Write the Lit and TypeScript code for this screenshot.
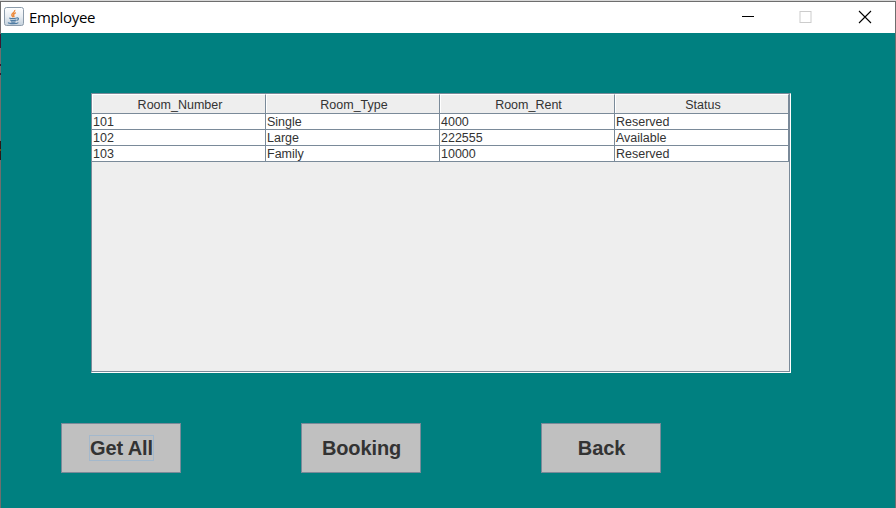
import { LitElement, html, css } from "lit";
import { customElement, property } from "lit/decorators.js";

const COLUMNS = ["Room_Number", "Room_Type", "Room_Rent", "Status"];
const ROOMS = [
  ["101", "Single", "4000", "Reserved"],
  ["102", "Large", "222555", "Available"],
  ["103", "Family", "10000", "Reserved"],
];

@customElement("title-bar")
class TitleBar extends LitElement {
  static styles = css`
    :host { display: flex; align-items: center; height: 31px; background: #fff; box-sizing: border-box; padding-left: 3px; }
    .logo { width: 20px; height: 20px; flex: none; display: block; margin-bottom: 1px; }
    .title { flex: 1; margin: 0 0 2px 5px; font: 15px/20px "Open Sans", "Noto Sans", sans-serif; letter-spacing: -.3px; color: #000; white-space: nowrap; }
    .controls { display: flex; width: 175px; }
    .controls svg { width: 58.5px; height: 31px; display: block; flex: none; }
  `;
  render() {
    return html`
      <svg class="logo" viewBox="0 0 20 20">
        <defs><linearGradient id="g" x1="0" y1="0" x2="0" y2="1"><stop offset="0" stop-color="#fff"/><stop offset=".5" stop-color="#e9eef3"/><stop offset="1" stop-color="#c3d0dc"/></linearGradient></defs>
        <rect x=".5" y=".5" width="19" height="18" rx="2" fill="url(#g)" stroke="#8c9cab"/>
        <path d="M10.8 3C11.2 5.2 7.6 6 7.8 8C8 9 8.7 9.4 9 10.2M11.8 5.6C10 6.6 9.2 7.3 9.6 8.4C9.9 9.2 10.2 9.4 9.8 10.3" fill="none" stroke="#ec8a3c" stroke-width="1.4"/>
        <path d="M5.2 11C7.2 11.8 10.6 11.7 12.6 11M6.2 13C8.2 13.8 10.2 13.7 12.2 13.1M7 14.7C8.2 15.4 10.2 15.3 11.6 14.8M12.4 11C15.2 10.3 15 12.7 12.6 13.4M4.2 15.5C4.8 17 12.8 17 14.4 15.6" fill="none" stroke="#4f7ca3" stroke-width="1.15"/>
      </svg>
      <div class="title">Employee</div>
      <div class="controls">
        <svg viewBox="0 0 58.5 31"><path d="M22 14.5h12" stroke="#000" shape-rendering="crispEdges"/></svg>
        <svg viewBox="0 0 58.5 31"><rect x="21" y="9.5" width="11" height="11" fill="none" stroke="#ccc"/></svg>
        <svg viewBox="0 0 58.5 31"><path d="M22 9l12 12M34 9l-12 12" stroke="#000" stroke-width="1.1"/></svg>
      </div>`;
  }
}

@customElement("room-table")
class RoomTable extends LitElement {
  static styles = css`
    :host { display: block; box-sizing: border-box; width: 700px; height: 280px; background: #eee; border: 1px solid #fff; border-top-color: #7a8a99; border-left-color: #7a8a99; font: 12.5px/16px "Liberation Sans", Arial, sans-serif; color: #333; }
    .pane { box-sizing: border-box; height: 278px; border: solid #7a8a99; border-width: 0 1px 1px 0; }
    .row { display: grid; grid-template-columns: 174px 174px 175px 174px; width: 697px; }
    .cell { box-sizing: border-box; height: 16px; background: #fff; border: solid #7a8a99; border-width: 0 1px 1px 0; padding-left: 1px; white-space: nowrap; }
    .head { height: 20px; background: #eee; border-top: 1px solid #fff; box-shadow: inset 1px 0 #fff; text-align: center; line-height: 20px; padding-left: 3px; }
  `;
  render() {
    return html`<div class="pane">
      <div class="row">${COLUMNS.map((c) => html`<div class="cell head">${c}</div>`)}</div>
      ${ROOMS.map((r) => html`<div class="row">${r.map((v) => html`<div class="cell">${v}</div>`)}</div>`)}
    </div>`;
  }
}

@customElement("push-button")
class PushButton extends LitElement {
  @property() label = "";
  @property({ type: Boolean }) focused = false;
  static styles = css`
    button { display: flex; align-items: center; justify-content: center; box-sizing: border-box; width: 120px; height: 50px; margin: 0; padding: 0 0 0 1px; background: #c0c0c0; border: 1px solid #7a8a99; border-radius: 0; font: bold 20px/24px "Liberation Sans", Arial, sans-serif; letter-spacing: -.12px; color: #333; white-space: nowrap; }
    .focus { outline: 1px solid #a3b8cc; }
  `;
  render() {
    return html`<button><span class=${this.focused ? "focus" : ""}>${this.label}</span></button>`;
  }
}

@customElement("app-root")
class AppRoot extends LitElement {
  static styles = css`
    :host { display: block; width: 896px; height: 508px; overflow: hidden; }
    .frame { height: 508px; background: #d8d8d8; padding-top: 1px; box-sizing: border-box; }
    .window { height: 507px; box-sizing: border-box; border: solid #6e6e6e; border-width: 1px 1px 0 0; background: #008080; display: grid; grid-template-columns: 1px 1fr; }
    .edge { background: linear-gradient(#6e6e6e 32px, #3d1730 32px 46px, #6e6e6e 46px 62px, #3d1730 62px 64px, #6e6e6e 64px 71px, #3d1730 71px 73px, #6e6e6e 73px 139px, #2c1717 139px 147px, #6d4a10 147px 149px, #2c1717 149px 158px, #6e6e6e 158px); }
    .table { margin: 60px 0 0 90px; }
    .buttons { display: flex; gap: 120px; margin: 50px 0 0 60px; }
  `;
  render() {
    return html`<div class="frame"><div class="window">
      <div class="edge"></div>
      <div>
        <title-bar></title-bar>
        <room-table class="table"></room-table>
        <div class="buttons">
          <push-button label="Get All" focused></push-button>
          <push-button label="Booking"></push-button>
          <push-button label="Back"></push-button>
        </div>
      </div>
    </div></div>`;
  }
}
